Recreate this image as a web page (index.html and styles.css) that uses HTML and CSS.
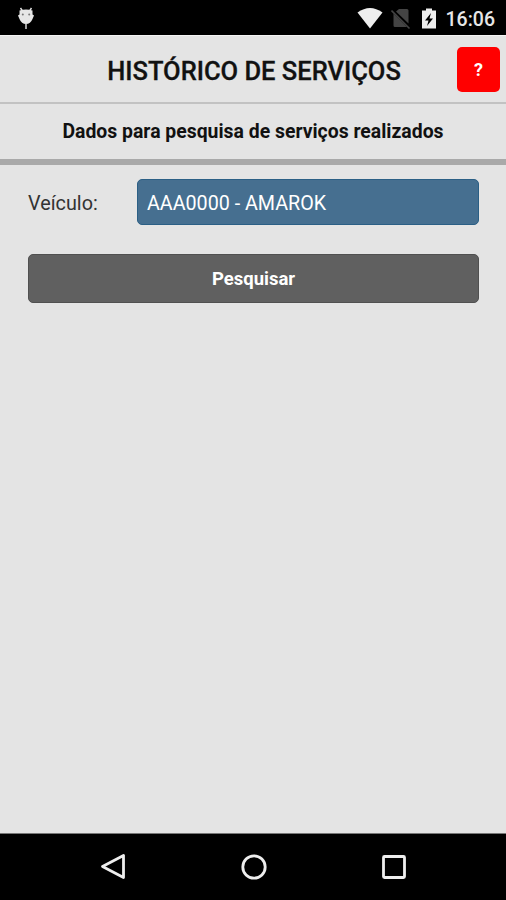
FILE: index.html
```html
<!DOCTYPE html>
<html lang="pt-BR">

<head>
    <meta charset="UTF-8" />
    <meta name="viewport" content="width=device-width, initial-scale=1.0" />
    <title>Histórico de Serviços</title>
    <link rel="stylesheet" href="styles.css">
</head>

<body>
    <div class="status-bar">
        <svg class="debug-icon" width="18" height="24" viewBox="0 0 18 24">
            <path d="M3.5 2l2 3M14.500 2l-2 3M9 18v5" stroke="#e6e6e6" stroke-width="1.400" fill="none" />
            <path d="M2.500 4.500Q9 2.500 15.500 4.500V8.500L17 9.500L15.500 13Q13.500 18 9 18Q4.500 18 2.500 13L1 9.500L2.500 8.500Z" fill="#e6e6e6" />
            <circle cx="5.800" cy="8.500" r="1" fill="#777" />
            <circle cx="12.200" cy="8.500" r="1" fill="#777" />
        </svg>
        <div class="status-icons">
            <svg width="26" height="22" viewBox="0 0 26 22">
                <path d="M0.500 4.500Q13-4.500 25.500 4.500L13 20.500Z" fill="#eee" />
            </svg>
            <svg width="20" height="22" viewBox="0 0 20 22">
                <path d="M8 1H16Q17.500 1 17.500 2.500V15.500L5 3.500ZM2.500 5.500L16 19H4Q2.500 19 2.500 17.500Z" fill="#444" />
                <path d="M0.500 2.500L18.500 20.500" stroke="#444" stroke-width="1.600" />
            </svg>
            <svg width="14" height="22" viewBox="0 0 14 22">
                <path d="M4 0.500H10V2.500H14V20.500H0V2.500H4Z" fill="#eee" />
                <path d="M9 5L3 12.500H6.500L5 18L11 10.500H7.500Z" fill="#000" />
            </svg>
        </div>
        <span class="clock">16:06</span>
    </div>

    <header>
        <h1>HISTÓRICO DE SERVIÇOS</h1>
        <button class="help">?</button>
    </header>
    <h2>Dados para pesquisa de serviços realizados</h2>

    <main>
        <div class="field">
            <label for="vehicle">Veículo:</label>
            <button class="vehicle" id="vehicle">AAA0000 - AMAROK</button>
        </div>
        <button class="search">Pesquisar</button>
    </main>

    <nav class="nav-bar">
        <svg width="28" height="28" viewBox="0 0 28 28">
            <path d="M24.500 2.500V24.500L3.500 13.500Z" />
        </svg>
        <svg width="28" height="28" viewBox="0 0 28 28">
            <circle cx="14" cy="14" r="11.200" />
        </svg>
        <svg width="28" height="28" viewBox="0 0 28 28">
            <rect x="3.500" y="3.500" width="21" height="21" rx="1" />
        </svg>
    </nav>
</body>

</html>
```

FILE: styles.css
```css
:root {
    --page-bg: #e4e4e4;
    --field-bg: #466f90;
    --button-bg: #606060;
    --help-bg: #ff0000;
}

* {
    margin: 0;
    padding: 0;
    box-sizing: border-box;
}

body {
    display: flex;
    flex-direction: column;
    height: 900px;
    font-family: Roboto, sans-serif;
    background-color: var(--page-bg);
    color: #111;
}

.status-bar {
    display: flex;
    align-items: center;
    height: 35px;
    padding: 0 11px 0 17px;
    background-color: #000;
}

.debug-icon {
    margin-top: 1px;
}

.status-icons {
    display: flex;
    gap: 8px;
    margin: 2px 10px 0 auto;
}

.status-icons svg:last-child {
    margin-left: 3px;
}

.clock {
    padding-top: 4px;
    font-size: 19.5px;
    font-weight: 500;
    line-height: 24px;
    color: #e6e6e6;
}

header {
    display: flex;
    align-items: center;
    height: 67px;
    padding: 1px 6px 0 51px;
    border-top: 1px solid #f4f4f4;
}

h1 {
    flex: 1;
    padding-top: 2px;
    font-size: 25.5px;
    font-weight: 500;
    -webkit-text-stroke: 0.3px #111;
    text-align: center;
    white-space: nowrap;
}

button {
    font-family: inherit;
    border: none;
    border-radius: 5px;
    color: #fff;
}

.help {
    width: 43px;
    height: 45px;
    background-color: var(--help-bg);
    font-size: 18px;
    font-weight: 700;
}

h2 {
    height: 63px;
    border-top: 2px solid #c2c2c2;
    border-bottom: 6px solid #a9a9a9;
    font-size: 19.4px;
    font-weight: 700;
    line-height: 56px;
    text-align: center;
    white-space: nowrap;
}

main {
    flex: 1;
    padding: 14px 27px 0 28px;
}

.field {
    display: flex;
    align-items: center;
    margin-bottom: 29px;
}

label {
    width: 109px;
    padding-top: 2px;
    font-size: 19.8px;
    color: #333;
}

.vehicle {
    flex: 1;
    height: 46px;
    padding: 2px 0 0 9px;
    border: 1px solid #2b5f85;
    background-color: var(--field-bg);
    font-size: 19.7px;
    text-align: left;
}

.search {
    display: block;
    width: 100%;
    height: 49px;
    border: 1px solid #505050;
    background-color: var(--button-bg);
    font-size: 18.5px;
    font-weight: 700;
}

.nav-bar {
    display: flex;
    justify-content: space-between;
    align-items: center;
    height: 67px;
    padding: 0 98px 0 99px;
    border-top: 1px solid #777;
    background-color: #000;
}

.nav-bar svg {
    fill: none;
    stroke: #eee;
    stroke-width: 2.8;
    stroke-linejoin: round;
}
```
